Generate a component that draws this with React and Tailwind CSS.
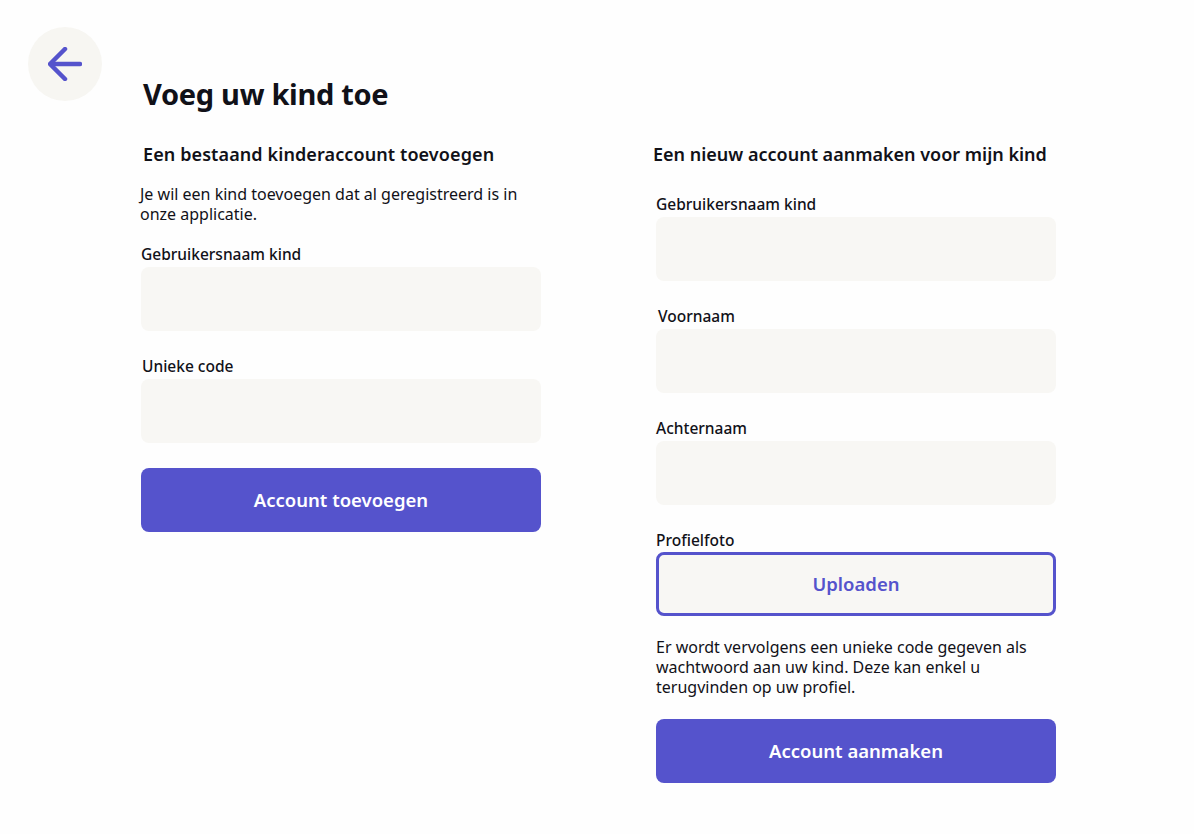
import React from 'react';

const Field = ({ label, labelClass = '' }) => (
  <div className="flex flex-col">
    <label className={`text-[15.5px] font-medium text-[#111118] leading-5 mb-[3px] ${labelClass}`}>{label}</label>
    <input className="h-16 w-full rounded-lg bg-[#f8f7f4] px-4 outline-none" />
  </div>
);

export default function App() {
  return (
    <div className="min-h-screen w-full bg-[#fefefe] text-[#111118] font-['Noto_Sans',sans-serif] relative">
      <button className="absolute left-[28px] top-[27px] flex h-[74px] w-[74px] items-center justify-center rounded-full bg-[#f7f6f2]">
        <svg width="34" height="34" viewBox="0 0 34 34" fill="none" stroke="#5553cc" strokeWidth="4.5" strokeLinecap="round" strokeLinejoin="round">
          <path d="M32 17H3" />
          <path d="M17 2L2 17l15 15" />
        </svg>
      </button>

      <div className="pl-[141px] pt-[74px]">
        <h1 className="text-[29px] font-bold leading-10 tracking-[-0.3px] ml-[2px]">Voeg uw kind toe</h1>

        <div className="mt-[28px] flex gap-[115px]">
          {/* bestaand account */}
          <div className="w-[400px] flex flex-col">
            <h2 className="text-[18px] font-semibold leading-6 ml-[2px] tracking-[0.1px]">Een bestaand kinderaccount toevoegen</h2>
            <p className="mt-[18px] text-[16px] leading-5 -ml-[1px] pr-4">
              Je wil een kind toevoegen dat al geregistreerd is in onze applicatie.
            </p>
            <div className="mt-[20px] flex flex-col gap-[25px]">
              <Field label="Gebruikersnaam kind" />
              <Field label="Unieke code" labelClass="ml-[1px]" />
            </div>
            <button className="mt-[25px] h-16 w-full rounded-lg bg-[#5553cc] text-[18.5px] font-semibold text-white">
              Account toevoegen
            </button>
          </div>

          {/* nieuw account */}
          <div className="w-[400px] flex flex-col">
            <h2 className="text-[18px] font-semibold leading-6 -ml-[3px]">Een nieuw account aanmaken voor mijn kind</h2>
            <div className="mt-[28px] flex flex-col gap-[25px]">
              <Field label="Gebruikersnaam kind" />
              <Field label="Voornaam" labelClass="ml-[2px]" />
              <Field label="Achternaam" />
              <div className="flex flex-col">
                <label className="text-[15.5px] font-medium leading-5 mb-[2px]">Profielfoto</label>
                <button className="h-16 w-full rounded-lg border-[3px] border-[#5553cc] bg-[#f8f7f4] text-[18.5px] font-semibold text-[#5553cc]">
                  Uploaden
                </button>
              </div>
            </div>
            <p className="mt-[21px] text-[16px] leading-5 pr-3">
              Er wordt vervolgens een unieke code gegeven als wachtwoord aan uw kind. Deze kan enkel u terugvinden op uw profiel.
            </p>
            <button className="mt-[22px] h-16 w-full rounded-lg bg-[#5553cc] text-[18.5px] font-semibold text-white">
              Account aanmaken
            </button>
          </div>
        </div>
      </div>
    </div>
  );
}
